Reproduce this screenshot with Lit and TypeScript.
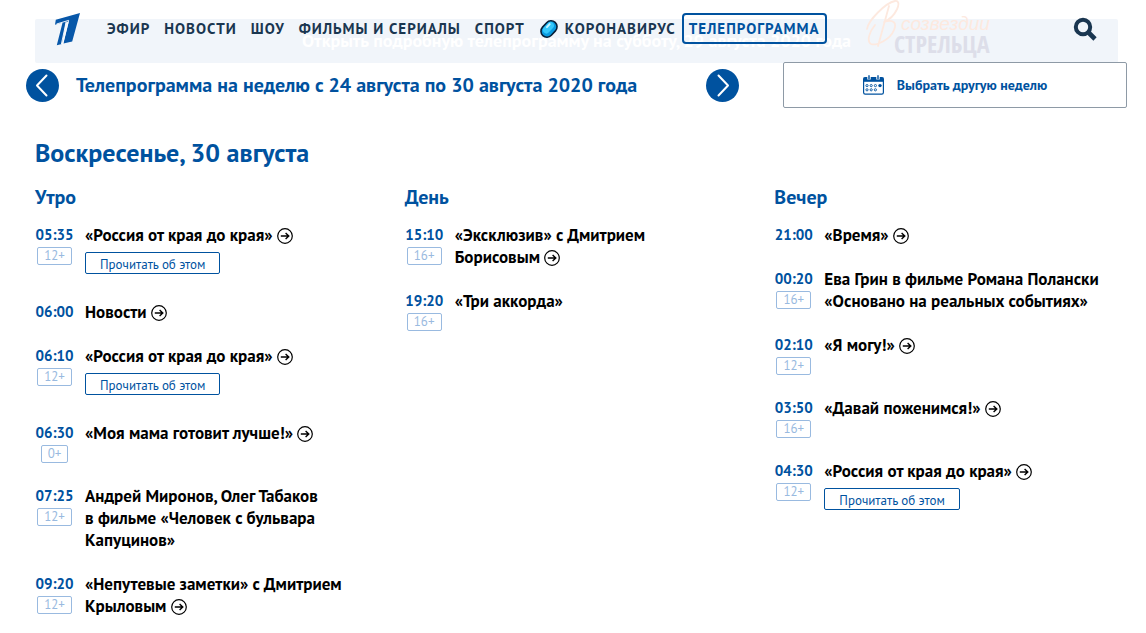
import { LitElement, html, css, svg, nothing } from "lit";
import { customElement, property } from "lit/decorators.js";

interface Show {
  time: string;
  age?: string;
  title: string;
  link?: boolean;
  read?: boolean;
}

interface Part {
  name: string;
  shows: Show[];
}

const NAV_BEFORE = ["Эфир", "Новости", "Шоу", "Фильмы и сериалы", "Спорт"];

const PARTS: Part[] = [
  {
    name: "Утро",
    shows: [
      { time: "05:35", age: "12+", title: "«Россия от края до края»", link: true, read: true },
      { time: "06:00", title: "Новости", link: true },
      { time: "06:10", age: "12+", title: "«Россия от края до края»", link: true, read: true },
      { time: "06:30", age: "0+", title: "«Моя мама готовит лучше!»", link: true },
      { time: "07:25", age: "12+", title: "Андрей Миронов, Олег Табаков в\u00a0фильме «Человек с\u00a0бульвара Капуцинов»" },
      { time: "09:20", age: "12+", title: "«Непутевые заметки» с\u00a0Дмитрием Крыловым", link: true },
    ],
  },
  {
    name: "День",
    shows: [
      { time: "15:10", age: "16+", title: "«Эксклюзив» с\u00a0Дмитрием Борисовым", link: true },
      { time: "19:20", age: "16+", title: "«Три аккорда»" },
    ],
  },
  {
    name: "Вечер",
    shows: [
      { time: "21:00", title: "«Время»", link: true },
      { time: "00:20", age: "16+", title: "Ева Грин в\u00a0фильме Романа Полански «Основано на\u00a0реальных событиях»" },
      { time: "02:10", age: "12+", title: "«Я могу!»", link: true },
      { time: "03:50", age: "16+", title: "«Давай поженимся!»", link: true },
      { time: "04:30", age: "12+", title: "«Россия от края до края»", link: true, read: true },
    ],
  },
];

const arrowCircle = svg`
  <circle cx="8" cy="8" r="7.3" fill="none" stroke="currentColor" stroke-width="1.2"/>
  <path d="M3.8 8H11.6M8.6 4.9 11.8 8 8.6 11.1" fill="none" stroke="currentColor" stroke-width="1.4"/>`;

@customElement("show-item")
export class ShowItem extends LitElement {
  @property({ attribute: false }) show!: Show;

  static styles = css`
    :host {
      display: grid;
      grid-template-columns: 39px minmax(0, 280px);
      column-gap: 11px;
      align-items: start;
    }
    .when {
      display: flex;
      flex-direction: column;
      align-items: center;
    }
    .time {
      font-size: 15px;
      font-weight: 700;
      line-height: 22px;
      color: #00529f;
    }
    .age {
      box-sizing: border-box;
      height: 18px;
      margin-top: 1px;
      padding: 0 6px;
      border: 1px solid #99bae0;
      border-radius: 2px;
      font-size: 13px;
      line-height: 16px;
      color: #99bae0;
    }
    .title {
      font-size: 17px;
      font-weight: 700;
      line-height: 22px;
      color: #000;
    }
    a {
      color: inherit;
      text-decoration: none;
    }
    .last {
      white-space: nowrap;
    }
    .go {
      display: inline-block;
      width: 16px;
      height: 16px;
      vertical-align: -3px;
    }
    .read {
      display: block;
      width: fit-content;
      box-sizing: border-box;
      height: 22px;
      margin: 6px 0 5px;
      padding: 2px 14px 0;
      border: 1px solid #00529f;
      border-radius: 2px;
      font-size: 13px;
      line-height: 20px;
      color: #00529f;
    }
  `;

  render() {
    const s = this.show;
    const cut = s.title.lastIndexOf(" ");
    return html`
      <div class="when">
        <time class="time">${s.time}</time>
        ${s.age ? html`<span class="age">${s.age}</span>` : nothing}
      </div>
      <div class="what">
        <div class="title">
          ${s.link
            ? html`<a href="#">${s.title.slice(0, cut + 1)}<span class="last">${s.title.slice(cut + 1)} <svg class="go" viewBox="0 0 16 16" aria-hidden="true">${arrowCircle}</svg></span></a>`
            : s.title}
        </div>
        ${s.read ? html`<a class="read" href="#">Прочитать об этом</a>` : nothing}
      </div>
    `;
  }
}

@customElement("site-header")
export class SiteHeader extends LitElement {
  static styles = css`
    :host {
      display: flex;
      align-items: center;
      height: 57px;
      padding: 0 49px 0 53px;
    }
    .logo {
      display: block;
      flex: none;
      width: 28px;
      height: 34px;
    }
    nav {
      display: flex;
      align-items: center;
      gap: 14px;
      margin-left: 26px;
      white-space: nowrap;
    }
    nav a {
      display: flex;
      align-items: center;
      font-size: 15px;
      font-weight: 700;
      line-height: 20px;
      letter-spacing: 1px;
      text-transform: uppercase;
      text-decoration: none;
      color: #1a3650;
    }
    .virus {
      width: 20px;
      height: 20px;
      margin-right: 6px;
    }
    nav .current {
      box-sizing: border-box;
      height: 31px;
      margin-left: -8px;
      padding: 0 5px;
      border: 2px solid #00529f;
      border-radius: 4px;
      color: #00529f;
    }
    .promo {
      width: 132px;
      height: 60px;
      margin-left: 38px;
    }
    button {
      margin-left: auto;
      padding: 0;
      border: 0;
      background: none;
      color: #1a3650;
    }
    button svg {
      display: block;
      width: 24px;
      height: 24px;
    }
  `;

  render() {
    return html`
      <a class="logo" href="#" aria-label="Первый канал">
        <svg width="28" height="34" viewBox="0 0 28 34">
          <path fill="#0757a9" d="M27 1 19.2 29.5 10.4 31.6 15.8 9.6 12.8 10.5 8.8 32 3.8 33.2 9.6 10.6 2 12.8 2.8 7.8Z"/>
          <path fill="none" stroke="#fff" stroke-width=".9" d="M3.5 12 15.6 8.4 9.6 32.4M13.2 9.6 8.4 32"/>
        </svg>
      </a>
      <nav>
        ${NAV_BEFORE.map((n) => html`<a href="#">${n}</a>`)}
        <a href="#">
          <svg class="virus" viewBox="0 0 20 20" aria-hidden="true">
            <g transform="rotate(-47 10 10)">
              <rect x="1" y="4" width="18" height="12" rx="6" fill="#0a9be0" stroke="#082038" stroke-width="1.6"/>
              <rect x="4" y="5.2" width="13" height="7" rx="3.5" fill="#35c8fb"/>
              <path d="M10 7.2h4" stroke="#c8f4ff" stroke-width="2" stroke-linecap="round"/>
            </g>
          </svg>Коронавирус</a>
        <a class="current" href="#">Телепрограмма</a>
      </nav>
      <svg class="promo" viewBox="0 0 132 60" role="img" aria-label="В созвездии Стрельца">
        <g fill="none" stroke="#fde9df" stroke-width="1.8" stroke-linecap="round" stroke-linejoin="round">
          <path d="M24 7 13 47M2 30C3 22 20 4 30 2c8-1 1 16-11 21 10-3 13 1 10 8C25 41 11 47 6 45 1 42 5 32 10 26"/>
        </g>
        <text x="36" y="31" font-family="'Liberation Sans', sans-serif" font-style="italic" font-size="19" fill="#fde9df">созвездии</text>
        <text x="29" y="54" font-family="'Open Sans Condensed', 'Roboto Condensed', sans-serif" font-weight="700" font-size="24" fill="#dddee9">СТРЕЛЬЦА</text>
      </svg>
      <button type="button" aria-label="Поиск">
        <svg viewBox="0 0 24 24">
          <circle cx="10" cy="10" r="7.2" fill="none" stroke="currentColor" stroke-width="4"/>
          <path d="m15 15 7 7" stroke="currentColor" stroke-width="4.6"/>
        </svg>
      </button>
    `;
  }
}

@customElement("app-root")
export class AppRoot extends LitElement {
  static styles = css`
    :host {
      display: block;
      position: relative;
      background: #fff;
      font-family: "PT Sans", "Noto Sans", sans-serif;
    }
    site-header {
      position: absolute;
      top: 0;
      left: 0;
      right: 0;
    }
    .open-day {
      display: block;
      margin: 0 28px 0 35px;
      border-radius: 2px;
      background: #f1f5fa;
      font-size: 18px;
      font-weight: 700;
      line-height: 44px;
      text-align: center;
      text-decoration: none;
      color: #fff;
    }
    .page {
      padding-top: 19px;
    }
    .week {
      display: flex;
      align-items: center;
      margin: -1px 19px 0 26px;
    }
    .week h1 {
      flex: 1;
      margin: 0 0 0 17px;
      font-size: 20px;
      font-weight: 700;
      line-height: 28px;
      color: #00529f;
    }
    .step {
      flex: none;
      padding: 0;
      border: 0;
      background: none;
    }
    .step svg {
      display: block;
      width: 33px;
      height: 33px;
    }
    .pick {
      box-sizing: border-box;
      display: flex;
      flex: 0 1 344px;
      align-items: center;
      justify-content: center;
      gap: 13px;
      height: 46px;
      margin-left: 44px;
      padding: 0;
      border: 1px solid #8e9aa6;
      border-radius: 2px;
      background: #fff;
      font-family: inherit;
      font-size: 14px;
      font-weight: 700;
      color: #00529f;
    }
    .pick svg {
      width: 21px;
      height: 20px;
    }
    main {
      padding: 29px 26px 14px 35px;
    }
    h2 {
      margin: 0;
      font-size: 26px;
      font-weight: 700;
      line-height: 32px;
      color: #00529f;
    }
    .parts {
      display: grid;
      grid-template-columns: repeat(3, minmax(0, 1fr));
      column-gap: 24px;
      margin-top: 14px;
    }
    h3 {
      margin: 0 0 13px;
      font-size: 20px;
      font-weight: 700;
      line-height: 28px;
      color: #00529f;
    }
    .shows {
      display: grid;
      gap: 22px;
    }
  `;

  render() {
    return html`
      <div class="page">
        <a class="open-day" href="#">Открыть подробную телепрограмму на субботу, 29 августа 2020 года</a>
        <div class="week">
          <button class="step" type="button" aria-label="Предыдущая неделя">
            <svg viewBox="0 0 33 33">
              <circle cx="16.5" cy="16.5" r="16.5" fill="#00529f"/>
              <path d="M20.5 6.5 11 16.5 20.5 26.5" fill="none" stroke="#fff" stroke-width="2" stroke-linecap="round" stroke-linejoin="round"/>
            </svg>
          </button>
          <h1>Телепрограмма на неделю с 24 августа по 30 августа 2020 года</h1>
          <button class="step" type="button" aria-label="Следующая неделя">
            <svg viewBox="0 0 33 33">
              <circle cx="16.5" cy="16.5" r="16.5" fill="#00529f"/>
              <path d="M12.5 6.5 22 16.5 12.5 26.5" fill="none" stroke="#fff" stroke-width="2" stroke-linecap="round" stroke-linejoin="round"/>
            </svg>
          </button>
          <button class="pick" type="button">
            <svg viewBox="0 0 21 20" aria-hidden="true">
              <rect x=".6" y="2.6" width="19.8" height="16.6" rx="1.6" fill="#fff" stroke="#00529f" stroke-width="1.2"/>
              <path d="M.6 2.6h19.8v4.2H.6z" fill="#00529f"/>
              <path d="M6 0v4.5M15 0v4.5" stroke="#fff" stroke-width="3.4"/>
              <path d="M6 .3v4M15 .3v4" stroke="#00529f" stroke-width="1.4"/>
              <g fill="none" stroke="#00529f" stroke-width=".9">
                <circle cx="4" cy="10.6" r="1.1"/><circle cx="8.2" cy="10.6" r="1.1"/><circle cx="12.4" cy="10.6" r="1.1"/>
                <circle cx="4" cy="14.8" r="1.1"/><circle cx="8.2" cy="14.8" r="1.1"/><circle cx="12.4" cy="14.8" r="1.1"/>
              </g>
              <circle cx="17" cy="10.6" r="1.7" fill="#00529f"/>
            </svg>
            Выбрать другую неделю
          </button>
        </div>
        <main>
          <h2>Воскресенье, 30 августа</h2>
          <div class="parts">
            ${PARTS.map(
              (p) => html`
                <section>
                  <h3>${p.name}</h3>
                  <div class="shows">${p.shows.map((s) => html`<show-item .show=${s}></show-item>`)}</div>
                </section>
              `
            )}
          </div>
        </main>
      </div>
      <site-header></site-header>
    `;
  }
}
